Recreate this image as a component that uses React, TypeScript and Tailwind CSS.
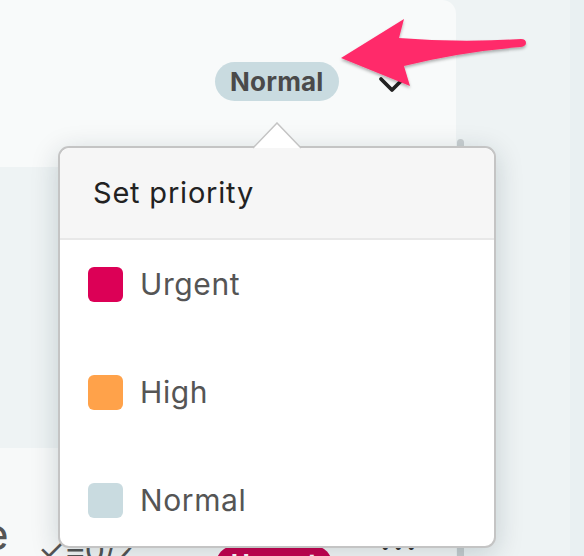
import React from "react";

const items = [
  { label: "Urgent", color: "bg-[#dc0056]" },
  { label: "High", color: "bg-[#ffa24a]" },
  { label: "Normal", color: "bg-[#c9dbe0]" },
];

export default function App() {
  return (
    <div
      className="relative w-[584px] h-[556px] overflow-hidden bg-[#eef3f4] flex"
      style={{ fontFamily: "Inter, 'Noto Sans', sans-serif" }}
    >
      {/* left column */}
      <div className="w-[456px] h-[556px] flex flex-col shrink-0">
        <div className="h-[167px] shrink-0 bg-[#f8fafa] rounded-tr-[14px] flex items-start pt-[62px] pl-[215px]">
          <div className="h-[39px] px-[15px] rounded-full bg-[#c9dbe0] flex items-center text-[26px] font-bold tracking-[0.2px] text-[#4a4a4a]">
            Normal
          </div>
          <svg className="ml-[38px] mt-[10px]" width="32" height="24" viewBox="0 0 32 24">
            <path d="M4 7 L15 18 L26 7" fill="none" stroke="#222" strokeWidth="3.8" strokeLinecap="round" strokeLinejoin="round" />
          </svg>
        </div>
        <div className="h-[281px] shrink-0" />
        <div className="flex-1 min-h-0 overflow-hidden bg-[#f7f9f9] flex items-start text-[#555]">
          <span className="-ml-[17px] mt-[64px] text-[44px] leading-none shrink-0">e</span>
          <span className="ml-[29px] mt-[86px] w-[178px] shrink-0 text-[32px] leading-none whitespace-nowrap">✓≡0/2</span>
          <span className="mt-[98px] shrink-0 px-[15px] h-[36px] rounded-full bg-[#c8004f] text-white font-bold text-[26px] leading-[36px]">Urgent</span>
          <span className="ml-[48px] mt-[84px] shrink-0 text-[30px] font-bold leading-none text-[#333] tracking-[3px]">···</span>
        </div>
      </div>
      {/* scrollbar + right area */}
      <div className="w-[114px] flex shrink-0">
        <div className="ml-[1px] mt-[139px] w-[7px] h-[420px] rounded-t-full bg-[#c9cfd1]" />
      </div>
      <div className="flex-1 bg-[#e9f0f2]" />

      {/* popover */}
      <div className="absolute left-[58px] top-[146px] w-[438px] h-[402px] rounded-[11px] border-2 border-[#c4c4c4] bg-white shadow-[0_6px_28px_rgba(0,40,50,0.18)]">
        <div className="h-[92px] rounded-t-[10px] bg-[#f6f6f6] border-b-2 border-[#e8e8e8] flex items-center pl-[33px] text-[29px] tracking-[0.8px] text-[#222] font-normal">
          Set priority
        </div>
        <div className="flex flex-col pl-[28px] pt-[27px] gap-[73px]">
          {items.map((it) => (
            <div key={it.label} className="flex items-center gap-[17px] h-[35px]">
              <div className={`w-[35px] h-[35px] rounded-[6px] ${it.color}`} />
              <span className="text-[30px] tracking-[0.6px] text-[#555]">{it.label}</span>
            </div>
          ))}
        </div>
      </div>
      {/* caret */}
      <svg className="absolute left-[252px] top-[122px]" width="50" height="27" viewBox="0 0 50 27">
        <path d="M1 26 L25 1 L49 26" fill="#fff" stroke="#c4c4c4" strokeWidth="1.5" />
      </svg>

      {/* pink arrow */}
      <svg className="absolute left-0 top-0" width="584" height="120" viewBox="0 0 584 120">
        <defs>
          <filter id="sh" x="-10%" y="-30%" width="120%" height="160%">
            <feDropShadow dx="0" dy="2" stdDeviation="1.5" floodColor="#000" floodOpacity="0.3" />
          </filter>
        </defs>
        <path
          d="M341 58 L404 19 L399 38 Q460 43 521 39 Q526 39 526 43 Q526 46 521 47 Q460 52 404 66 L410 86 Z"
          fill="#ff2c6a"
          filter="url(#sh)"
        />
      </svg>
    </div>
  );
}
